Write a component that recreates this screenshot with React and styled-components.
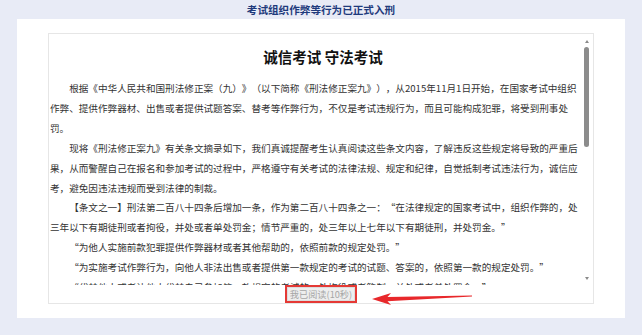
import React from "react";
import styled, { createGlobalStyle } from "styled-components";

const GlobalStyle = createGlobalStyle`
  html, body {
    margin: 0;
    padding: 0;
    background: #e8ebf6;
  }
  body {
    font-family: "Microsoft YaHei", "Noto Sans CJK SC", "Noto Sans", sans-serif;
    text-spacing-trim: space-all;
  }
`;

const paragraphs = [
  "根据《中华人民共和国刑法修正案（九）》（以下简称《刑法修正案九》），从2015年11月1日开始，在国家考试中组织作弊、提供作弊器材、出售或者提供试题答案、替考等作弊行为，不仅是考试违规行为，而且可能构成犯罪，将受到刑事处罚。",
  "现将《刑法修正案九》有关条文摘录如下，我们真诚提醒考生认真阅读这些条文内容，了解违反这些规定将导致的严重后果，从而警醒自己在报名和参加考试的过程中，严格遵守有关考试的法律法规、规定和纪律，自觉抵制考试违法行为，诚信应考，避免因违法违规而受到法律的制裁。",
  "【条文之一】刑法第二百八十四条后增加一条，作为第二百八十四条之一：“在法律规定的国家考试中，组织作弊的，处三年以下有期徒刑或者拘役，并处或者单处罚金；情节严重的，处三年以上七年以下有期徒刑，并处罚金。”",
  "“为他人实施前款犯罪提供作弊器材或者其他帮助的，依照前款的规定处罚。”",
  "“为实施考试作弊行为，向他人非法出售或者提供第一款规定的考试的试题、答案的，依照第一款的规定处罚。”",
  "“代替他人或者让他人代替自己参加第一款规定的考试的，处拘役或者管制，并处或者单处罚金。”",
];

export default function App() {
  return (
    <>
      <GlobalStyle />
      <Page>
        <TitleBar>考试组织作弊等行为已正式入刑</TitleBar>
        <Panel>
          <Reader>
            <ScrollRow>
              <Content>
                <Heading>诚信考试 守法考试</Heading>
                {paragraphs.map((p, i) => (
                  <Para key={i}>{p}</Para>
                ))}
              </Content>
              <ScrollBar>
                <ArrowUp />
                <Thumb />
                <Spacer />
                <ArrowDown />
              </ScrollBar>
            </ScrollRow>
            <Footer>
              <ReadButton disabled>我已阅读(10秒)</ReadButton>
              <Pointer width="102" height="14" viewBox="0 0 102 14">
                <path
                  d="M0 7 L19 1 L15.5 5 L100 3.4 L100 4.6 L15.5 9.2 L19 13 Z"
                  fill="#e8282b"
                />
              </Pointer>
            </Footer>
          </Reader>
        </Panel>
      </Page>
    </>
  );
}

const Page = styled.div`
  width: 642px;
  height: 335px;
  box-sizing: border-box;
  padding: 0 17px 17px;
  display: flex;
  flex-direction: column;
`;

const TitleBar = styled.div`
  height: 19px;
  line-height: 20px;
  text-align: center;
  font-size: 10.6px;
  font-weight: bold;
  color: #1e3a7c;
`;

const Panel = styled.div`
  flex: 1;
  min-height: 0;
  background: #ffffff;
  padding: 14px 31px;
  display: flex;
`;

const Reader = styled.div`
  flex: 1;
  border: 1px solid #e6e6e6;
  display: flex;
  flex-direction: column;
  min-height: 0;
`;

const ScrollRow = styled.div`
  flex: 1;
  min-height: 0;
  display: flex;
`;

const Content = styled.div`
  width: 530px;
  padding-left: 1px;
  overflow: hidden;
  color: #333333;
`;

const Heading = styled.h2`
  margin: 13px 0 12px;
  padding-left: 16px;
  text-align: center;
  font-size: 14.5px;
  line-height: 20px;
  font-weight: bold;
  color: #111111;
`;

const Para = styled.p`
  margin: 0;
  font-size: 9.6px;
  line-height: 19.9px;
  text-indent: 2em;
`;

const ScrollBar = styled.div`
  flex: 1;
  display: flex;
  flex-direction: column;
  align-items: center;
  padding: 6px 0 5px;
`;

const ArrowUp = styled.div`
  width: 0;
  height: 0;
  border-left: 2.5px solid transparent;
  border-right: 2.5px solid transparent;
  border-bottom: 3px solid #8a8a8a;
`;

const ArrowDown = styled.div`
  width: 0;
  height: 0;
  border-left: 2.5px solid transparent;
  border-right: 2.5px solid transparent;
  border-top: 3px solid #8a8a8a;
`;

const Thumb = styled.div`
  margin-top: 4px;
  width: 5px;
  height: 100px;
  border-radius: 3px;
  background: #8c8c8c;
`;

const Spacer = styled.div`
  flex: 1;
`;

const Footer = styled.div`
  position: relative;
  height: 18px;
  display: flex;
  justify-content: center;
  align-items: flex-start;
  padding-top: 2px;
  box-sizing: border-box;
`;

const ReadButton = styled.button`
  height: 12px;
  padding: 0 2px;
  border: 1px solid #dcdcdc;
  background: #eeeeee;
  color: #a6a6a6;
  font-family: inherit;
  font-size: 9.2px;
  line-height: 10px;
  outline: 2px solid #e53935;
  outline-offset: 0;
  box-sizing: content-box;
`;

const Pointer = styled.svg`
  position: absolute;
  left: 323px;
  top: 7px;
`;
